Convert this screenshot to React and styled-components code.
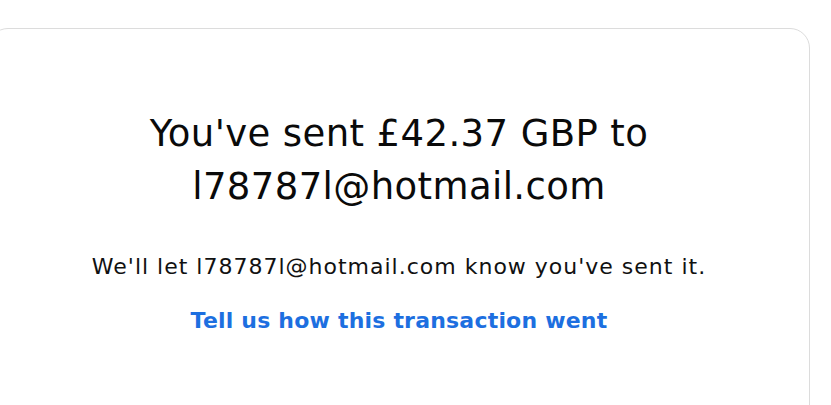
import React from 'react'
import styled, { createGlobalStyle } from 'styled-components'

const GlobalStyle = createGlobalStyle`
  body {
    margin: 0;
    background: #ffffff;
    font-family: 'DejaVu Sans', 'Noto Sans', sans-serif;
    color: #000000;
    overflow: hidden;
  }
`

const Page = styled.div`
  box-sizing: border-box;
  height: 100vh;
  padding-top: 28px;
  overflow: hidden;
`

const Card = styled.div`
  box-sizing: border-box;
  margin-left: -12px;
  width: 822px;
  height: 400px;
  border: 1px solid #dcdcdc;
  border-radius: 20px;
  padding: 78px 20px 40px;
  display: flex;
  flex-direction: column;
  align-items: center;
  text-align: center;
`

const Heading = styled.h1`
  margin: 0;
  max-width: 580px;
  font-size: 37px;
  font-weight: 400;
  line-height: 53px;
  letter-spacing: 0.4px;
  color: #0a0a0a;
`

const Note = styled.p`
  margin: 39px 0 0;
  font-size: 22px;
  line-height: 30px;
  letter-spacing: 1px;
  color: #111111;
`

const FeedbackLink = styled.a`
  margin-top: 24px;
  font-size: 22px;
  font-weight: 700;
  line-height: 30px;
  letter-spacing: 0.2px;
  color: #1d6fe0;
  text-decoration: none;
  cursor: pointer;
`

export default function App() {
  return (
    <Page>
      <GlobalStyle />
      <Card>
        <Heading>You've sent £42.37 GBP to l78787l@hotmail.com</Heading>
        <Note>We'll let l78787l@hotmail.com know you've sent it.</Note>
        <FeedbackLink>Tell us how this transaction went</FeedbackLink>
      </Card>
    </Page>
  )
}
